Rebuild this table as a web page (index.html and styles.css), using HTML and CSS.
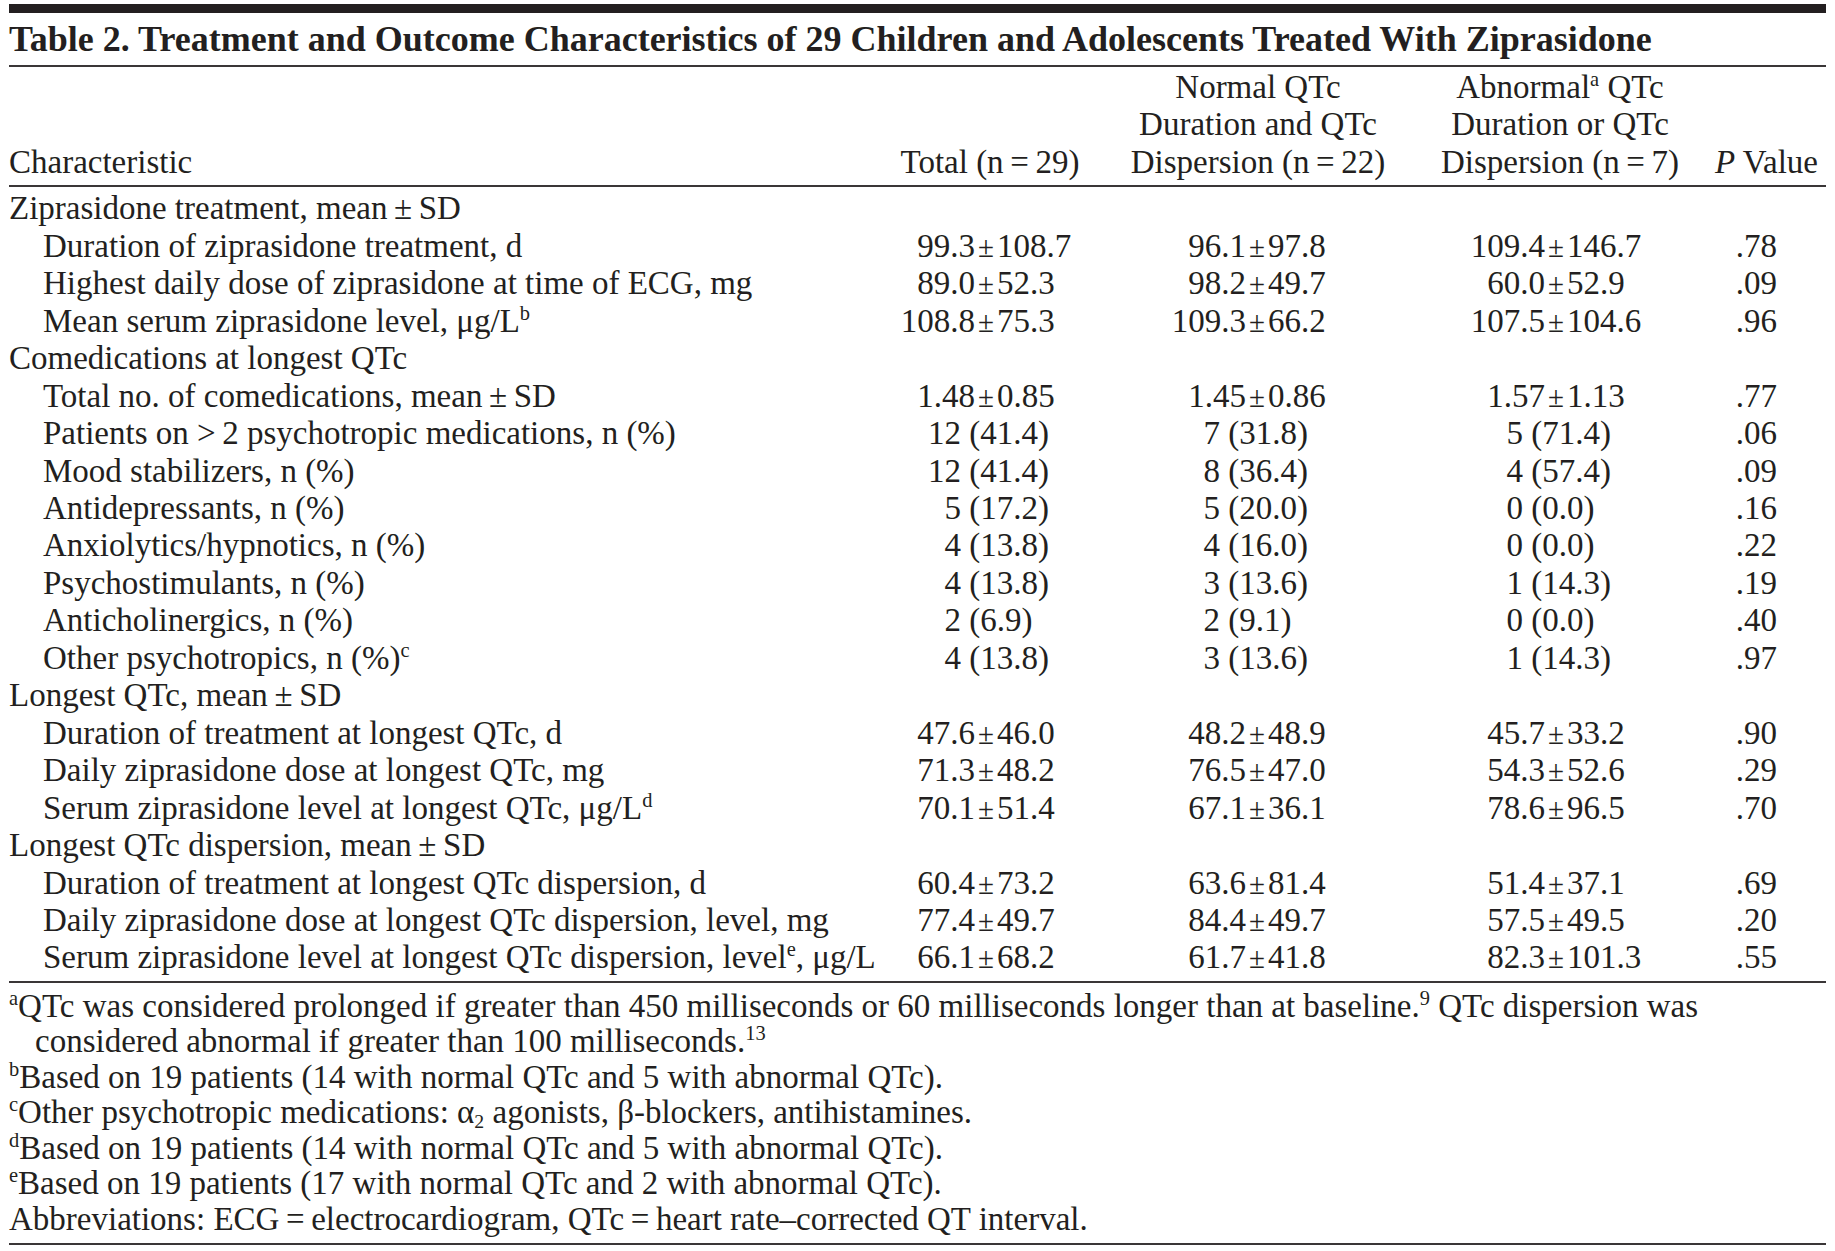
FILE: index.html
```html
<!DOCTYPE html>
<html lang="en">
<head>
<meta charset="utf-8">
<title>Table 2</title>
<link rel="stylesheet" href="styles.css">
</head>
<body>
<div class="page">
  <div class="topbar"></div>
  <h1 class="title">Table 2. Treatment and Outcome Characteristics of 29 Children and Adolescents Treated With Ziprasidone</h1>
  <table class="tbl">
    <colgroup>
      <col class="w-lab"><col class="w-t"><col class="w-nq"><col class="w-aq"><col class="w-p">
    </colgroup>
    <thead>
      <tr>
        <th class="h-lab">Characteristic</th>
        <th class="h-c">Total (n&thinsp;=&thinsp;29)</th>
        <th class="h-c">Normal QTc<br>Duration and QTc<br>Dispersion (n&thinsp;=&thinsp;22)</th>
        <th class="h-c">Abnormal<sup>a</sup> QTc<br>Duration or QTc<br>Dispersion (n&thinsp;=&thinsp;7)</th>
        <th class="h-p"><i>P</i> Value</th>
      </tr>
    </thead>
    <tbody>
      <tr class="grp"><td class="lab">Ziprasidone treatment, mean&thinsp;±&thinsp;SD</td><td></td><td></td><td></td><td></td></tr>
      <tr><td class="lab ind">Duration of ziprasidone treatment, d</td><td class="t"><span class="n">99.3</span><span class="pm">±</span>108.7</td><td class="nq"><span class="n">96.1</span><span class="pm">±</span>97.8</td><td class="aq"><span class="n">109.4</span><span class="pm">±</span>146.7</td><td class="p">.78</td></tr>
      <tr><td class="lab ind">Highest daily dose of ziprasidone at time of ECG, mg</td><td class="t"><span class="n">89.0</span><span class="pm">±</span>52.3</td><td class="nq"><span class="n">98.2</span><span class="pm">±</span>49.7</td><td class="aq"><span class="n">60.0</span><span class="pm">±</span>52.9</td><td class="p">.09</td></tr>
      <tr><td class="lab ind">Mean serum ziprasidone level, μg/L<sup>b</sup></td><td class="t"><span class="n">108.8</span><span class="pm">±</span>75.3</td><td class="nq"><span class="n">109.3</span><span class="pm">±</span>66.2</td><td class="aq"><span class="n">107.5</span><span class="pm">±</span>104.6</td><td class="p">.96</td></tr>
      <tr class="grp"><td class="lab">Comedications at longest QTc</td><td></td><td></td><td></td><td></td></tr>
      <tr><td class="lab ind">Total no. of comedications, mean&thinsp;±&thinsp;SD</td><td class="t"><span class="n">1.48</span><span class="pm">±</span>0.85</td><td class="nq"><span class="n">1.45</span><span class="pm">±</span>0.86</td><td class="aq"><span class="n">1.57</span><span class="pm">±</span>1.13</td><td class="p">.77</td></tr>
      <tr class="ct"><td class="lab ind">Patients on &gt;&thinsp;2 psychotropic medications, n (%)</td><td class="t"><span class="n">12</span> (41.4)</td><td class="nq"><span class="n">7</span> (31.8)</td><td class="aq"><span class="n">5</span> (71.4)</td><td class="p">.06</td></tr>
      <tr class="ct"><td class="lab ind">Mood stabilizers, n (%)</td><td class="t"><span class="n">12</span> (41.4)</td><td class="nq"><span class="n">8</span> (36.4)</td><td class="aq"><span class="n">4</span> (57.4)</td><td class="p">.09</td></tr>
      <tr class="ct"><td class="lab ind">Antidepressants, n (%)</td><td class="t"><span class="n">5</span> (17.2)</td><td class="nq"><span class="n">5</span> (20.0)</td><td class="aq"><span class="n">0</span> (0.0)</td><td class="p">.16</td></tr>
      <tr class="ct"><td class="lab ind">Anxiolytics/hypnotics, n (%)</td><td class="t"><span class="n">4</span> (13.8)</td><td class="nq"><span class="n">4</span> (16.0)</td><td class="aq"><span class="n">0</span> (0.0)</td><td class="p">.22</td></tr>
      <tr class="ct"><td class="lab ind">Psychostimulants, n (%)</td><td class="t"><span class="n">4</span> (13.8)</td><td class="nq"><span class="n">3</span> (13.6)</td><td class="aq"><span class="n">1</span> (14.3)</td><td class="p">.19</td></tr>
      <tr class="ct"><td class="lab ind">Anticholinergics, n (%)</td><td class="t"><span class="n">2</span> (6.9)</td><td class="nq"><span class="n">2</span> (9.1)</td><td class="aq"><span class="n">0</span> (0.0)</td><td class="p">.40</td></tr>
      <tr class="ct"><td class="lab ind">Other psychotropics, n (%)<sup>c</sup></td><td class="t"><span class="n">4</span> (13.8)</td><td class="nq"><span class="n">3</span> (13.6)</td><td class="aq"><span class="n">1</span> (14.3)</td><td class="p">.97</td></tr>
      <tr class="grp"><td class="lab">Longest QTc, mean&thinsp;±&thinsp;SD</td><td></td><td></td><td></td><td></td></tr>
      <tr><td class="lab ind">Duration of treatment at longest QTc, d</td><td class="t"><span class="n">47.6</span><span class="pm">±</span>46.0</td><td class="nq"><span class="n">48.2</span><span class="pm">±</span>48.9</td><td class="aq"><span class="n">45.7</span><span class="pm">±</span>33.2</td><td class="p">.90</td></tr>
      <tr><td class="lab ind">Daily ziprasidone dose at longest QTc, mg</td><td class="t"><span class="n">71.3</span><span class="pm">±</span>48.2</td><td class="nq"><span class="n">76.5</span><span class="pm">±</span>47.0</td><td class="aq"><span class="n">54.3</span><span class="pm">±</span>52.6</td><td class="p">.29</td></tr>
      <tr><td class="lab ind">Serum ziprasidone level at longest QTc, μg/L<sup>d</sup></td><td class="t"><span class="n">70.1</span><span class="pm">±</span>51.4</td><td class="nq"><span class="n">67.1</span><span class="pm">±</span>36.1</td><td class="aq"><span class="n">78.6</span><span class="pm">±</span>96.5</td><td class="p">.70</td></tr>
      <tr class="grp"><td class="lab">Longest QTc dispersion, mean&thinsp;±&thinsp;SD</td><td></td><td></td><td></td><td></td></tr>
      <tr><td class="lab ind">Duration of treatment at longest QTc dispersion, d</td><td class="t"><span class="n">60.4</span><span class="pm">±</span>73.2</td><td class="nq"><span class="n">63.6</span><span class="pm">±</span>81.4</td><td class="aq"><span class="n">51.4</span><span class="pm">±</span>37.1</td><td class="p">.69</td></tr>
      <tr><td class="lab ind">Daily ziprasidone dose at longest QTc dispersion, level, mg</td><td class="t"><span class="n">77.4</span><span class="pm">±</span>49.7</td><td class="nq"><span class="n">84.4</span><span class="pm">±</span>49.7</td><td class="aq"><span class="n">57.5</span><span class="pm">±</span>49.5</td><td class="p">.20</td></tr>
      <tr><td class="lab ind">Serum ziprasidone level at longest QTc dispersion, level<sup>e</sup>, μg/L</td><td class="t"><span class="n">66.1</span><span class="pm">±</span>68.2</td><td class="nq"><span class="n">61.7</span><span class="pm">±</span>41.8</td><td class="aq"><span class="n">82.3</span><span class="pm">±</span>101.3</td><td class="p">.55</td></tr>
    </tbody>
  </table>
  <div class="notes">
    <p class="note"><sup>a</sup>QTc was considered prolonged if greater than 450 milliseconds or 60 milliseconds longer than at baseline.<sup>9</sup> QTc dispersion was<br>considered abnormal if greater than 100 milliseconds.<sup>13</sup></p>
    <p class="note"><sup>b</sup>Based on 19 patients (14 with normal QTc and 5 with abnormal QTc).</p>
    <p class="note"><sup>c</sup>Other psychotropic medications: α<sub>2</sub> agonists, β-blockers, antihistamines.</p>
    <p class="note"><sup>d</sup>Based on 19 patients (14 with normal QTc and 5 with abnormal QTc).</p>
    <p class="note"><sup>e</sup>Based on 19 patients (17 with normal QTc and 2 with abnormal QTc).</p>
    <p class="note">Abbreviations: ECG&thinsp;=&thinsp;electrocardiogram, QTc&thinsp;=&thinsp;heart rate–corrected QT interval.</p>
  </div>
</div>
</body>
</html>
```

FILE: styles.css
```css
html, body {
  margin: 0;
  padding: 0;
  background: #ffffff;
}

body {
  font-family: "Liberation Serif", "Times New Roman", serif;
  color: #231f20;
  font-size: 33px;
}

.page {
  width: 1817px;
  padding: 4px 9px 0 9px;
}

.topbar {
  height: 9px;
  background: #231f20;
}

.title {
  margin: 0;
  font-size: 36px;
  font-weight: bold;
  line-height: 52px;
  white-space: nowrap;
  border-bottom: 2px solid #3a3637;
}

.tbl {
  width: 1817px;
  border-collapse: collapse;
  table-layout: fixed;
  font-size: 33px;
  line-height: 37.45px;
}

.w-lab { width: 871px; }
.w-t { width: 220px; }
.w-nq { width: 316px; }
.w-aq { width: 288px; }
.w-p { width: 122px; }

.tbl th {
  font-weight: normal;
  vertical-align: bottom;
  padding: 2px 0 4px 0;
  border-bottom: 2px solid #3a3637;
  white-space: nowrap;
}

.h-lab { text-align: left; }
.h-c { text-align: center; }
.h-p { text-align: right; padding-right: 8px !important; }

.tbl td {
  padding: 0;
  white-space: nowrap;
  vertical-align: middle;
}

.tbl tbody tr:first-child td { padding-top: 3px; }
.tbl tbody tr:last-child td {
  padding-bottom: 4px;
  border-bottom: 2px solid #3a3637;
}

.lab { text-align: left; }
.ind { padding-left: 34px !important; }

.t, .nq, .aq { text-align: left; }

.n {
  display: inline-block;
  text-align: right;
}

.pm {
  font-size: 0.88em;
  line-height: 0;
  margin: 0 3px 0 3px;
}

.t .n { width: 95px; }
.nq .n { width: 146px; }
.aq .n { width: 129px; }

.ct .t .n { width: 81px; }
.ct .nq .n { width: 120px; }
.ct .aq .n { width: 107px; }

.p {
  text-align: right;
  padding-right: 49px !important;
}

sup {
  font-size: 0.62em;
  line-height: 0;
  vertical-align: 0.6em;
}

sub {
  font-size: 0.6em;
  line-height: 0;
  vertical-align: -0.25em;
}

.notes {
  padding: 6px 0 6px 0;
  border-bottom: 2px solid #3a3637;
}

.note {
  margin: 0;
  font-size: 33px;
  line-height: 35.5px;
  padding-left: 26px;
  text-indent: -26px;
  white-space: nowrap;
}
```
